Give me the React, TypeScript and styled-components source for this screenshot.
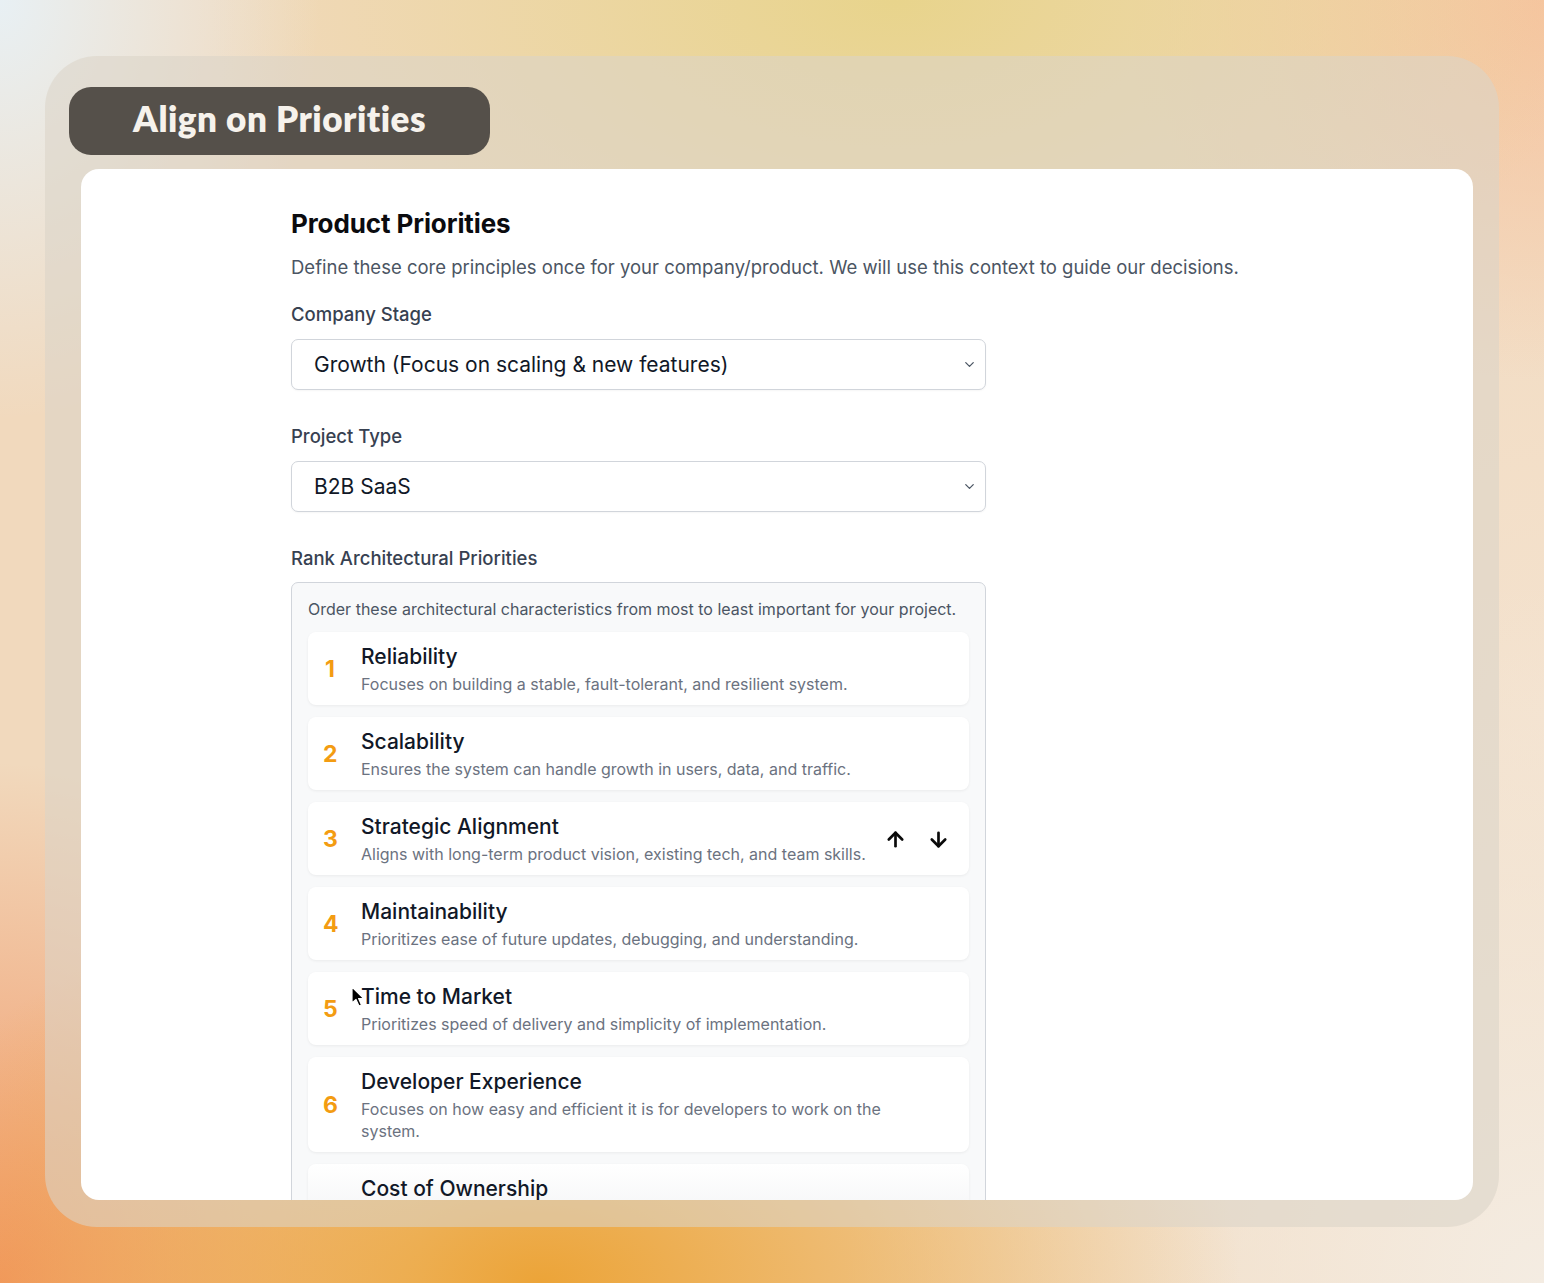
import React from "react";
import styled, { createGlobalStyle } from "styled-components";
import { ArrowUp, ArrowDown, ChevronDown } from "lucide-react";

const GlobalStyle = createGlobalStyle`
  html, body { margin: 0; padding: 0; }
  body {
    width: 1544px;
    height: 1283px;
    overflow: hidden;
    font-family: Inter, "Noto Sans", sans-serif;
    -webkit-font-smoothing: antialiased;
  }
  * { box-sizing: border-box; }
`;

const Page = styled.div`
  width: 1544px;
  height: 1283px;
  padding: 56px 45px 0 45px;
  background-color: #f1d9bd;
  background-image:
    radial-gradient(ellipse 320px 420px at 0% 0%, rgba(232, 240, 244, 1) 0%, rgba(232, 240, 244, 0) 100%),
    radial-gradient(ellipse 700px 380px at 58% 0%, rgba(232, 212, 140, 1) 0%, rgba(232, 212, 140, 0) 100%),
    radial-gradient(ellipse 420px 380px at 100% 0%, rgba(246, 196, 160, 1) 0%, rgba(246, 196, 160, 0) 100%),
    radial-gradient(ellipse 700px 420px at 35% 100%, rgba(236, 164, 56, 1) 0%, rgba(236, 164, 56, 0) 100%),
    radial-gradient(ellipse 420px 520px at 0% 100%, rgba(242, 150, 100, 1) 0%, rgba(242, 150, 100, 0) 100%),
    radial-gradient(ellipse 700px 700px at 100% 100%, rgba(244, 236, 226, 1) 0%, rgba(244, 236, 226, 0) 100%),
    radial-gradient(ellipse 500px 700px at 100% 55%, rgba(244, 226, 206, 1) 0%, rgba(244, 226, 206, 0) 100%);
`;

const Frame = styled.div`
  width: 1454px;
  height: 1171px;
  border-radius: 52px;
  background: rgba(218, 212, 200, 0.58);
  padding-top: 31px;
  display: flex;
  flex-direction: column;
`;

const TitlePill = styled.div`
  margin-left: 24px;
  width: 421px;
  height: 68px;
  border-radius: 22px;
  background: #55504a;
  display: flex;
  align-items: center;
  padding: 0 0 6px 64px;
  color: #f6f2ec;
  font-family: Lato, "Open Sans", sans-serif;
  font-weight: 800;
  font-size: 35px;
  letter-spacing: 0.5px;
  white-space: nowrap;
`;

const Card = styled.div`
  margin-top: 14px;
  margin-left: 36px;
  width: 1392px;
  height: 1031px;
  background: #ffffff;
  border-radius: 18px;
  overflow: hidden;
  padding: 39px 0 0 210px;
`;

const Content = styled.div`
  width: 695px;
  display: flex;
  flex-direction: column;
`;

const Heading = styled.h1`
  margin: 0;
  font-size: 26px;
  line-height: 32px;
  font-weight: 700;
  color: #0b0b0f;
  letter-spacing: -0.1px;
  white-space: nowrap;
`;

const Lead = styled.p`
  margin: 13px 0 0 0;
  font-size: 18.5px;
  line-height: 28px;
  color: #4b5563;
  white-space: nowrap;
`;

const Label = styled.div<{ $top: number }>`
  margin-top: ${(p) => p.$top}px;
  font-size: 18.5px;
  line-height: 28px;
  font-weight: 500;
  color: #374151;
  white-space: nowrap;
`;

const SelectBox = styled.div`
  margin-top: 11px;
  height: 51px;
  border: 1px solid #d1d5db;
  border-radius: 7px;
  background: #ffffff;
  display: flex;
  align-items: center;
  justify-content: space-between;
  padding: 0 8px 0 22px;
  font-size: 21px;
  color: #111827;
  box-shadow: 0 1px 2px rgba(0, 0, 0, 0.04);
`;

const Chevron = styled(ChevronDown)`
  color: #4b5563;
`;

const ListBox = styled.div`
  margin-top: 10px;
  border: 1px solid #d1d5db;
  border-radius: 7px;
  background: #f8f9fa;
  padding: 14px 16px 0 16px;
  display: flex;
  flex-direction: column;
  gap: 12px;
`;

const Hint = styled.div`
  font-size: 16px;
  line-height: 24px;
  color: #4b5563;
  margin-bottom: -1px;
  white-space: nowrap;
`;

const Item = styled.div<{ $faded?: boolean }>`
  position: relative;
  min-height: 73px;
  flex-shrink: 0;
  border-radius: 8px;
  background: ${(p) => (p.$faded ? "linear-gradient(#ffffff, #eceef0)" : "#ffffff")};
  box-shadow: 0 1px 3px rgba(0, 0, 0, 0.06);
  display: flex;
  align-items: center;
  padding: 12px 19px 10px 15px;
`;

const Rank = styled.div`
  width: 14px;
  flex-shrink: 0;
  font-size: 23px;
  font-weight: 700;
  color: #f39c12;
  margin-right: 24px;
  line-height: 1;
  text-align: center;
`;

const TextBlock = styled.div`
  flex: 1;
  max-width: 528px;
  display: flex;
  flex-direction: column;
`;

const ItemTitle = styled.div`
  font-size: 21px;
  line-height: 26px;
  font-weight: 500;
  color: #111827;
  white-space: nowrap;
`;

const ItemDesc = styled.div`
  margin-top: 3px;
  font-size: 16px;
  line-height: 22px;
  color: #6b7280;
`;

const Controls = styled.div<{ $show: boolean }>`
  margin-left: auto;
  display: flex;
  align-items: center;
  gap: 20px;
  color: #0a0a0a;
  visibility: ${(p) => (p.$show ? "visible" : "hidden")};
`;

const Cursor = styled.svg`
  position: absolute;
  left: 43px;
  top: 14px;
`;

const priorities = [
  { title: "Reliability", desc: "Focuses on building a stable, fault-tolerant, and resilient system." },
  { title: "Scalability", desc: "Ensures the system can handle growth in users, data, and traffic." },
  { title: "Strategic Alignment", desc: "Aligns with long-term product vision, existing tech, and team skills." },
  { title: "Maintainability", desc: "Prioritizes ease of future updates, debugging, and understanding." },
  { title: "Time to Market", desc: "Prioritizes speed of delivery and simplicity of implementation." },
  { title: "Developer Experience", desc: "Focuses on how easy and efficient it is for developers to work on the system." },
  { title: "Cost of Ownership", desc: "Minimizes long-term infrastructure, licensing, and operational costs over the life of the system." },
];

export default function App() {
  return (
    <>
      <GlobalStyle />
      <Page>
        <Frame>
          <TitlePill>Align on Priorities</TitlePill>
          <Card>
            <Content>
              <Heading>Product Priorities</Heading>
              <Lead>
                Define these core principles once for your company/product. We will use this context to guide our decisions.
              </Lead>
              <Label $top={19}>Company Stage</Label>
              <SelectBox>
                <span>Growth (Focus on scaling &amp; new features)</span>
                <Chevron size={15} strokeWidth={2} />
              </SelectBox>
              <Label $top={32}>Project Type</Label>
              <SelectBox>
                <span>B2B SaaS</span>
                <Chevron size={15} strokeWidth={2} />
              </SelectBox>
              <Label $top={32}>Rank Architectural Priorities</Label>
              <ListBox>
                <Hint>Order these architectural characteristics from most to least important for your project.</Hint>
                {priorities.map((p, i) => (
                  <Item key={p.title} $faded={i === 6}>
                    <Rank>{i + 1}</Rank>
                    <TextBlock>
                      <ItemTitle>{p.title}</ItemTitle>
                      <ItemDesc>{p.desc}</ItemDesc>
                    </TextBlock>
                    <Controls $show={i === 2}>
                      <ArrowUp size={23} strokeWidth={2.8} />
                      <ArrowDown size={23} strokeWidth={2.8} />
                    </Controls>
                    {i === 4 && (
                      <Cursor width="14" height="22" viewBox="0 0 14 22">
                        <path d="M1 1 L1 17 L5 13.5 L8 20 L10.5 19 L7.6 12.6 L12.5 12.4 Z" fill="#000" stroke="#fff" strokeWidth="1.2" strokeLinejoin="round" />
                      </Cursor>
                    )}
                  </Item>
                ))}
              </ListBox>
            </Content>
          </Card>
        </Frame>
      </Page>
    </>
  );
}
